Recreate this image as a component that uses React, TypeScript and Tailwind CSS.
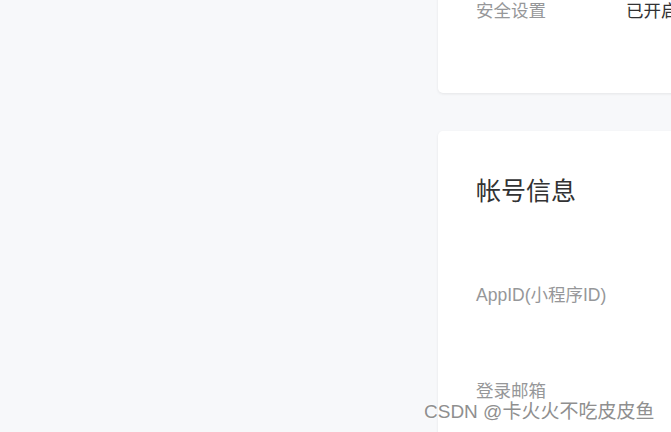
export default function App() {
    return (
        <div
            className="relative w-[671px] h-[432px] overflow-hidden bg-[#f7f8fa] flex"
            style={{ fontFamily: '"Liberation Sans", "Noto Sans CJK SC", sans-serif' }}
        >
            <div className="w-[438px] shrink-0" />
            <div className="flex-1 flex flex-col gap-[38px]">
                {/* top card, scrolled mostly out of view */}
                <div className="mt-[-36px] bg-white rounded-b-[5px] rounded-tl-[5px] shadow-[0_1px_3px_rgba(0,0,0,0.08)] pb-[33px]">
                    <div className="h-[96px] flex items-center pl-[38px] text-[17.5px] leading-none">
                        <span className="w-[150px] shrink-0 text-[#969799]">安全设置</span>
                        <span className="text-[#323233] whitespace-nowrap">已开启</span>
                    </div>
                </div>

                {/* account info card */}
                <div className="bg-white rounded-tl-[5px] shadow-[0_1px_3px_rgba(0,0,0,0.08)] flex-1">
                    <h2 className="pt-[46px] pl-[38px] h-[74px] text-[25px] leading-[28px] text-[#323233]">
                        帐号信息
                    </h2>
                    <div className="mt-[43px]">
                        <div className="h-[96px] flex items-center pl-[38px] text-[17.5px] leading-none">
                            <span className="w-[150px] shrink-0 text-[#969799] whitespace-nowrap">AppID(小程序ID)</span>
                        </div>
                        <div className="h-[96px] flex items-center pl-[38px] text-[17.5px] leading-none">
                            <span className="w-[150px] shrink-0 text-[#969799]">登录邮箱</span>
                        </div>
                    </div>
                </div>
            </div>

            <div className="absolute left-[424px] top-[402px] text-[19px] leading-[20px] text-[#8f8f8f] whitespace-nowrap [text-shadow:0_0_2px_#fff,0_0_2px_#fff]">
                CSDN @卡火火不吃皮皮鱼
            </div>
        </div>
    );
}
